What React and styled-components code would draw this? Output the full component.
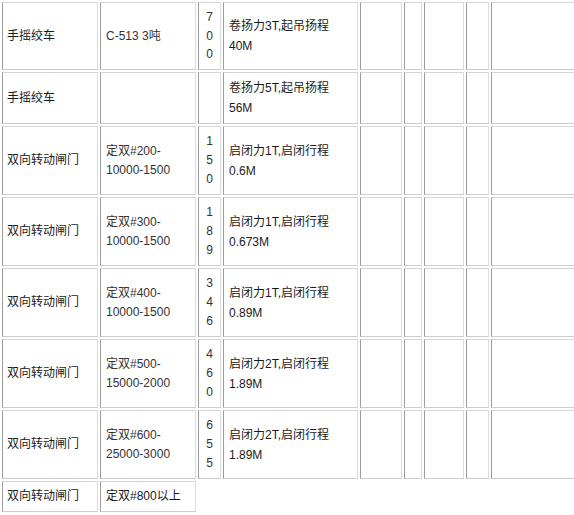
import React from "react";
import styled, { createGlobalStyle } from "styled-components";

const Global = createGlobalStyle`
  html, body { margin: 0; padding: 0; background: #fff; overflow: hidden; }
  body { font-family: "Liberation Sans", Arial, "Noto Sans CJK SC", sans-serif; font-size: 12px; color: #222; }
`;

const Table = styled.table`
  border-collapse: separate;
  border-spacing: 2px;
  table-layout: fixed;
  width: ${(p) => p.$w}px;
  margin: 0;
`;

const Row = styled.tr`
  height: ${(p) => p.$h}px;
`;

const Cell = styled.td`
  box-sizing: border-box;
  border-style: solid;
  border-width: 1px;
  border-color: #d2d6da #dcdcdc #cdcdcd #9c9c9c;
  padding: 4px 5px;
  vertical-align: middle;
  font-family: "Liberation Sans", Arial, "Noto Sans CJK SC", sans-serif;
  font-size: 12px;
  line-height: ${(p) => p.$lh || 19}px;
  color: ${(p) => p.$color || "#1a1a1a"};
  text-align: ${(p) => (p.$center ? "center" : "left")};
  padding-left: ${(p) => (p.$pl != null ? p.$pl : 5)}px;
  padding-right: ${(p) => (p.$center ? 0 : 5)}px;
  white-space: nowrap;
  overflow: hidden;
`;

const Line = styled.span`
  display: block;
`;

const Blank = styled.td`
  padding: 0;
  border: none;
`;

const colWidths = [96, 96, 23, 135, 42, 18, 40, 23, 120];
const tableWidth = colWidths.reduce((a, b) => a + b, 0) + 2 * (colWidths.length + 1);

const rows = [
  { h: 68, name: "手摇绞车", model: ["C-513 3吨"], digits: "700", desc: ["卷扬力3T,起吊扬程", "40M"] },
  { h: 52, name: "手摇绞车", model: [], digits: "", desc: ["卷扬力5T,起吊扬程", "56M"] },
  { h: 69, name: "双向转动闸门", model: ["定双#200-", "10000-1500"], digits: "150", desc: ["启闭力1T,启闭行程", "0.6M"] },
  { h: 69, name: "双向转动闸门", model: ["定双#300-", "10000-1500"], digits: "189", desc: ["启闭力1T,启闭行程", "0.673M"] },
  { h: 69, name: "双向转动闸门", model: ["定双#400-", "10000-1500"], digits: "346", desc: ["启闭力1T,启闭行程", "0.89M"] },
  { h: 69, name: "双向转动闸门", model: ["定双#500-", "15000-2000"], digits: "460", desc: ["启闭力2T,启闭行程", "1.89M"] },
  { h: 69, name: "双向转动闸门", model: ["定双#600-", "25000-3000"], digits: "655", desc: ["启闭力2T,启闭行程", "1.89M"] },
];

export default function App() {
  return (
    <>
      <Global />
      <Table $w={tableWidth}>
        <colgroup>
          {colWidths.map((w, i) => (
            <col key={i} style={{ width: w }} />
          ))}
        </colgroup>
        <tbody>
          {rows.map((r, i) => (
            <Row key={i} $h={r.h}>
              <Cell $pl={4}>{r.name}</Cell>
              <Cell $color="#333">
                {r.model.map((m, j) => (
                  <Line key={j}>{m}</Line>
                ))}
              </Cell>
              <Cell $center $pl={0} $lh={18.7} $color="#333">
                {r.digits.split("").map((d, j) => (
                  <Line key={j}>{d}</Line>
                ))}
              </Cell>
              <Cell $lh={20}>
                {r.desc.map((d, j) => (
                  <Line key={j}>{d}</Line>
                ))}
              </Cell>
              <Cell />
              <Cell />
              <Cell />
              <Cell />
              <Cell />
            </Row>
          ))}
          <Row $h={31}>
            <Cell $pl={4}>双向转动闸门</Cell>
            <Cell>定双#800以上</Cell>
            <Blank colSpan={7} />
          </Row>
        </tbody>
      </Table>
    </>
  );
}
